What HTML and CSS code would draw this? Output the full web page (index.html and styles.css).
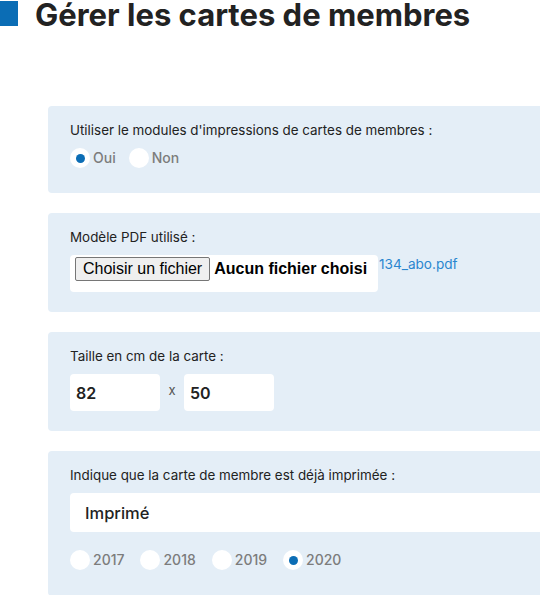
FILE: index.html
```html
<!DOCTYPE html>
<html lang="fr">
<head>
<meta charset="utf-8">
<title>Gérer les cartes de membres</title>
<link rel="stylesheet" href="styles.css">
</head>
<body>
<div class="page">
  <h1 class="title"><span class="title-mark"></span>Gérer les cartes de membres</h1>

  <div class="cards">
    <section class="card">
      <div class="label">Utiliser le modules d'impressions de cartes de membres :</div>
      <div class="radios radios-first">
        <label class="radio"><span class="dot checked"></span><span class="rtext">Oui</span></label>
        <label class="radio"><span class="dot"></span><span class="rtext">Non</span></label>
      </div>
    </section>

    <section class="card">
      <div class="label">Modèle PDF utilisé :</div>
      <div class="file-row">
        <div class="file-box">
          <span class="file-btn">Choisir un fichier</span><span class="file-status">Aucun fichier choisi</span>
        </div>
        <a class="file-link" href="#">134_abo.pdf</a>
      </div>
    </section>

    <section class="card">
      <div class="label">Taille en cm de la carte :</div>
      <div class="size-row">
        <div class="field small">82</div>
        <span class="times">x</span>
        <div class="field small">50</div>
      </div>
    </section>

    <section class="card card-last">
      <div class="label">Indique que la carte de membre est déjà imprimée :</div>
      <div class="field wide">Imprimé</div>
      <div class="radios radios-years">
        <label class="radio"><span class="dot"></span><span class="rtext">2017</span></label>
        <label class="radio"><span class="dot"></span><span class="rtext">2018</span></label>
        <label class="radio"><span class="dot"></span><span class="rtext">2019</span></label>
        <label class="radio"><span class="dot checked"></span><span class="rtext">2020</span></label>
      </div>
    </section>
  </div>
</div>
</body>
</html>
```

FILE: styles.css
```css
html, body {
  margin: 0;
  padding: 0;
  background: #ffffff;
  overflow: hidden;
}

body {
  font-family: "Inter", "Liberation Sans", sans-serif;
  color: #222222;
}

.page {
  width: 600px;
}

.title {
  display: flex;
  align-items: flex-start;
  gap: 17px;
  margin: 0;
  height: 30px;
  font-size: 31px;
  font-weight: 700;
  line-height: 30px;
  color: #222222;
  letter-spacing: 0;
}

.title-mark {
  display: block;
  flex: none;
  width: 18px;
  height: 25px;
  margin-top: 1px;
  background: #0b6db5;
}

.cards {
  display: flex;
  flex-direction: column;
  gap: 20px;
  margin: 76px 0 0 48px;
}

.card {
  background: #e4eef7;
  border-radius: 4px;
  padding: 14px 22px 20px;
}

.card-last {
  padding-bottom: 26px;
}

.label {
  font-size: 13.4px;
  line-height: 20px;
  color: #222222;
  margin-bottom: 8px;
}

.radios {
  display: flex;
  align-items: center;
}

.radios-first {
  gap: 13px;
  padding-bottom: 5px;
}

.radios-years {
  gap: 16px;
  margin-top: 18px;
}

.radio {
  display: flex;
  align-items: center;
  gap: 3px;
}

.dot {
  width: 20px;
  height: 20px;
  border-radius: 50%;
  background: #ffffff;
  display: flex;
  align-items: center;
  justify-content: center;
}

.dot.checked::after {
  content: "";
  width: 9px;
  height: 9px;
  border-radius: 50%;
  background: #0b6db5;
}

.rtext {
  font-size: 14px;
  font-weight: 500;
  color: #7c7c7c;
  line-height: 20px;
}

.file-row {
  display: flex;
  align-items: flex-start;
}

.file-box {
  display: flex;
  align-items: flex-start;
  width: 303px;
  height: 35px;
  padding: 2px 0 0 5px;
  background: #ffffff;
  border-radius: 4px;
  box-sizing: content-box;
}

.file-btn {
  display: block;
  box-sizing: border-box;
  height: 24px;
  padding: 0 7px;
  border: 1px solid #767676;
  border-radius: 2px;
  background: #efefef;
  font-family: "Liberation Sans", Arial, sans-serif;
  font-size: 16px;
  line-height: 22px;
  color: #000000;
}

.file-status {
  display: block;
  margin-left: 4px;
  font-family: "Liberation Sans", Arial, sans-serif;
  font-size: 16px;
  font-weight: 700;
  line-height: 24px;
  color: #000000;
}

.file-link {
  margin-left: 1px;
  font-size: 13.6px;
  line-height: 18px;
  color: #2a86cf;
  text-decoration: none;
}

.size-row {
  display: flex;
  align-items: center;
}

.field {
  background: #ffffff;
  border-radius: 4px;
  box-sizing: border-box;
  font-size: 16px;
  font-weight: 600;
  color: #222222;
  display: flex;
  align-items: center;
}

.field.small {
  width: 90px;
  height: 37px;
  padding-left: 6px;
}

.times {
  width: 24px;
  text-align: center;
  font-size: 13px;
  color: #555555;
  margin-top: -6px;
}

.field.wide {
  height: 39px;
  padding-left: 15px;
  font-weight: 500;
  font-size: 16.5px;
}
```
